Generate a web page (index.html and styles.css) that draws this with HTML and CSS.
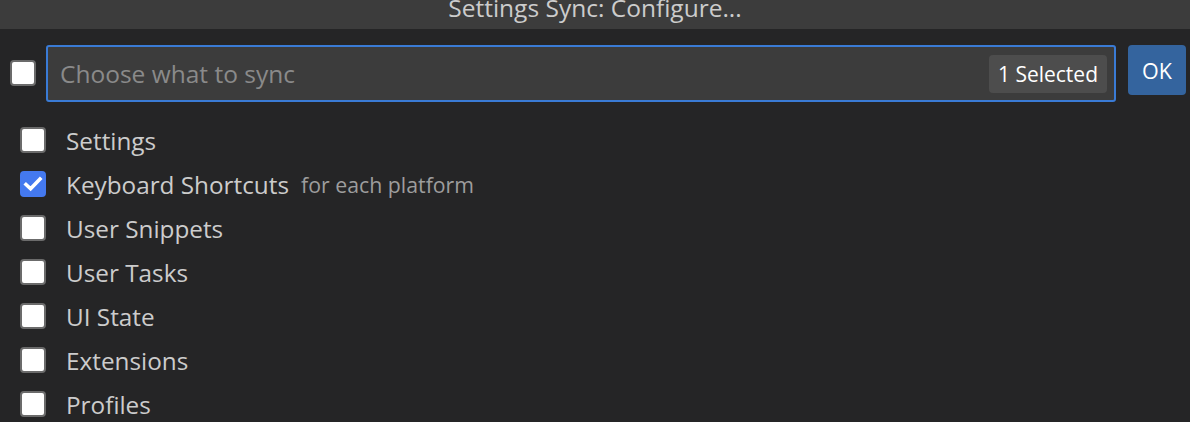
FILE: index.html
```html
<!DOCTYPE html>
<html lang="en">
<head>
<meta charset="utf-8">
<title>Settings Sync: Configure...</title>
<link rel="stylesheet" href="styles.css">
</head>
<body>
<div class="widget">
  <div class="titlebar"><span class="title">Settings Sync: Configure...</span></div>
  <div class="header">
    <span class="cb cb-top"></span>
    <div class="inputbox">
      <span class="placeholder">Choose what to sync</span>
      <span class="badge">1 Selected</span>
    </div>
    <button class="ok">OK</button>
  </div>
  <ul class="list">
    <li class="row"><span class="cb"></span><span class="label">Settings</span></li>
    <li class="row"><span class="cb checked"><svg class="check" viewBox="0 0 26 26" width="26" height="26"><path d="M6 13.5 L10.6 17.8 L20 8" fill="none" stroke="#fff" stroke-width="3.6" stroke-linecap="square"/></svg></span><span class="label">Keyboard Shortcuts</span><span class="desc">for each platform</span></li>
    <li class="row"><span class="cb"></span><span class="label">User Snippets</span></li>
    <li class="row"><span class="cb"></span><span class="label">User Tasks</span></li>
    <li class="row"><span class="cb"></span><span class="label">UI State</span></li>
    <li class="row"><span class="cb"></span><span class="label">Extensions</span></li>
    <li class="row"><span class="cb"></span><span class="label">Profiles</span></li>
  </ul>
</div>
</body>
</html>
```
FILE: styles.css
```css
html, body {
  margin: 0;
  padding: 0;
  background: #252526;
  height: 100%;
  overflow: hidden;
}
.widget {
  font-family: "Open Sans", "Noto Sans", "DejaVu Sans", sans-serif;
  color: #cccccc;
}
.titlebar {
  height: 29px;
  background: #3c3c3c;
  display: flex;
  justify-content: center;
  overflow: hidden;
}
.title {
  font-size: 24.5px;
  line-height: 15px;
  color: #cccccc;
}
.header {
  display: flex;
  align-items: flex-start;
  padding: 16px 4px 0 10px;
  height: 56px;
}
.cb {
  box-sizing: border-box;
  width: 26px;
  height: 26px;
  flex: none;
  background: #ffffff;
  border: 2px solid #6b6b6b;
  border-radius: 4px;
  display: flex;
  align-items: center;
  justify-content: center;
  overflow: hidden;
}
.cb-top {
  margin-top: 15px;
  margin-right: 10px;
}
.inputbox {
  box-sizing: border-box;
  flex: 1;
  height: 57px;
  background: #3c3c3c;
  border: 2px solid #3a7bd5;
  border-radius: 3px;
  display: flex;
  align-items: center;
  padding: 0 7px 0 12px;
}
.placeholder {
  flex: 1;
  font-size: 24.5px;
  color: #8a8a8a;
}
.badge {
  background: #4d4d4d;
  color: #ffffff;
  font-size: 21px;
  line-height: 38px;
  padding: 0 9px;
  border-radius: 4px;
}
.ok {
  margin-left: 12px;
  width: 58px;
  height: 50px;
  background: #34649e;
  border: none;
  border-radius: 4px;
  color: #ffffff;
  font-family: "Open Sans", "Noto Sans", sans-serif;
  font-size: 21.5px;
  padding: 0;
}
.list {
  list-style: none;
  margin: 0;
  padding: 17px 0 0 20px;
}
.row {
  height: 44px;
  display: flex;
  align-items: center;
}
.row .cb {
  margin-right: 20px;
}
.cb.checked {
  background: #4479ef;
  border-color: #4479ef;
}
.check {
  flex: none;
}
.label {
  font-size: 24.3px;
  color: #cccccc;
}
.desc {
  font-size: 21.3px;
  color: #9d9d9d;
  margin-left: 12px;
}
```
